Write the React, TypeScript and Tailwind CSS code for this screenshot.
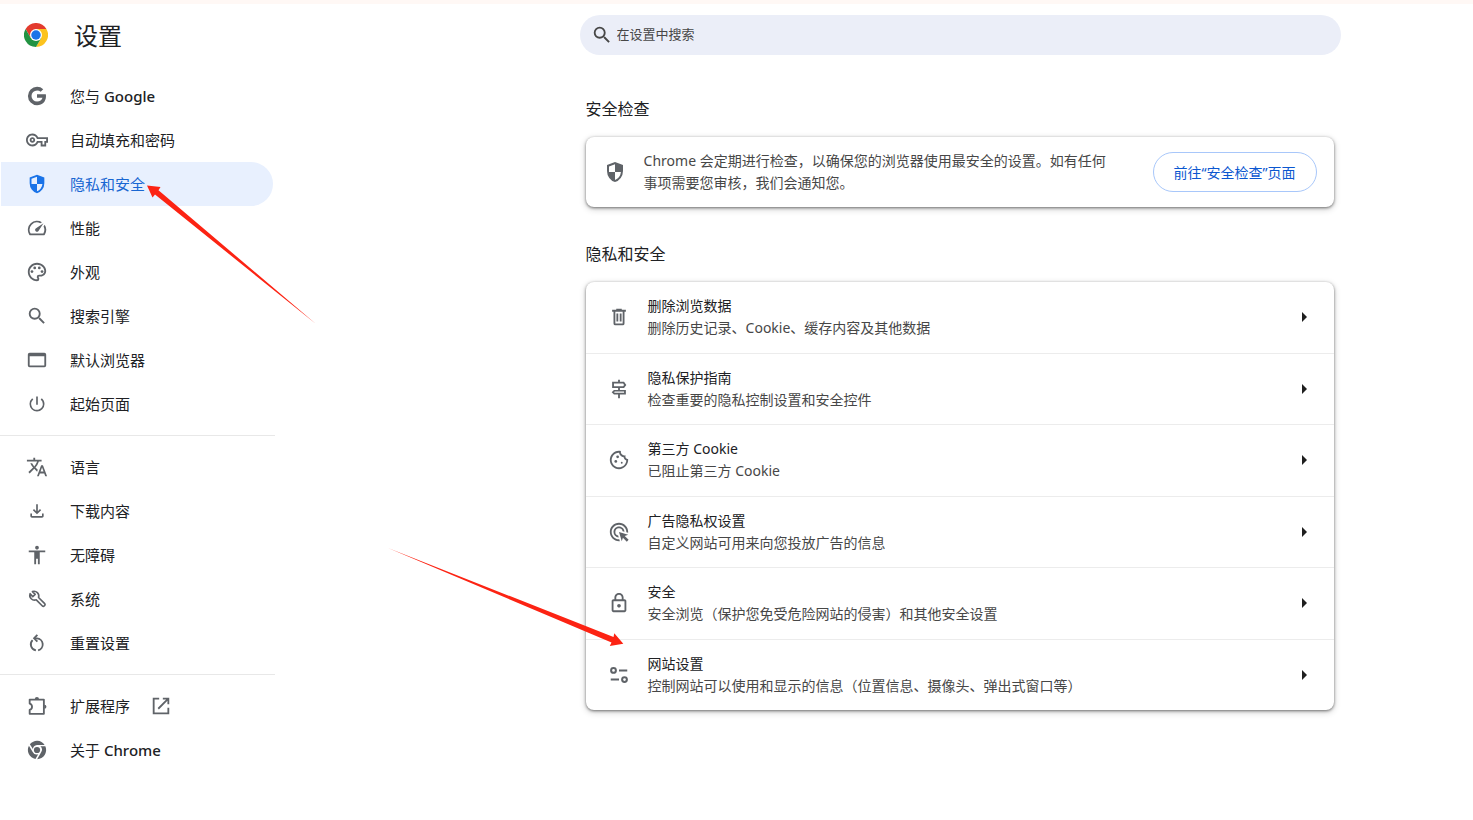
import type { ReactNode } from 'react'
import {
  MdOutlineVpnKey,
  MdOutlinePalette,
  MdSearch,
  MdPowerSettingsNew,
  MdTranslate,
  MdAccessibility,
  MdOutlineCookie,
  MdOutlineLock,
  MdAdsClick,
  MdOutlineFileDownload,
} from 'react-icons/md'

function Svg({ children, box = '0 0 24 24' }: { children: ReactNode; box?: string }) {
  return (
    <svg viewBox={box} width="1em" height="1em" fill="currentColor" aria-hidden="true">
      {children}
    </svg>
  )
}

const ShieldIcon = () => (
  <Svg box="0 -960 960 960">
    <path d="M480-80q-139-35-229.500-159.500T160-516v-244l320-120 320 120v244q0 152-90.500 276.500T480-80Zm0-84q97-30 162-118.500T718-480H480v-315l-240 90v207q0 7 2 18h238v316Z" />
  </Svg>
)

const GoogleIcon = () => (
  <Svg>
    <path d="M12 10.200v3.700h6c-.6 2.500-2.800 4.200-5.900 4.200a6.100 6.100 0 1 1 0-12.200c1.500 0 2.800.5 3.900 1.500l2.800-2.800A10 10 0 0 0 12.100 2a10 10 0 1 0 0 20c5.800 0 9.700-4.100 9.700-9.800 0-.7-.1-1.400-.2-2z" />
  </Svg>
)

const SpeedIcon = () => (
  <Svg>
    <path d="m20.38 8.57-1.23 1.85a8 8 0 0 1-.22 7.58H5.07A8 8 0 0 1 15.58 6.85l1.85-1.23A10 10 0 0 0 3.35 19a2 2 0 0 0 1.72 1h13.85a2 2 0 0 0 1.74-1 10 10 0 0 0-.27-10.44zm-9.79 6.84a2 2 0 0 0 2.83 0l5.66-8.49-8.49 5.66a2 2 0 0 0 0 2.83z" />
  </Svg>
)

const BrowserIcon = () => (
  <Svg>
    <path d="M20 4H4a2 2 0 0 0-2 2v12a2 2 0 0 0 2 2h16a2 2 0 0 0 2-2V6a2 2 0 0 0-2-2zm0 14H4V8h16v10z" />
  </Svg>
)

const WrenchIcon = () => (
  <Svg>
    <g fill="none" stroke="currentColor" strokeWidth="1.800" strokeLinejoin="round">
      <path d="M4.500 6.200a5.200 5.200 0 0 0 6.700 6.700l6.700 6.700a1.300 1.300 0 0 0 1.900 0l.6-.6a1.300 1.300 0 0 0 0-1.900l-6.700-6.700A5.200 5.200 0 0 0 7 3.900l3 3-2.600 2.500z" />
    </g>
  </Svg>
)

const ResetIcon = () => (
  <Svg>
    <g fill="none" stroke="currentColor" strokeWidth="2">
      <path d="M10.800 20A6.600 6.600 0 0 1 7.200 8.800" />
      <path d="M13.200 20A6.600 6.600 0 0 0 12 7H9.600" />
      <path d="M12.400 3.200 8.800 6.900l3.600 3.700" />
    </g>
  </Svg>
)

const OpenIcon = () => (
  <Svg>
    <path d="M10 3v2H5v14h14v-5h2v7H3V3h7zm4 0h7v7h-2V6.400l-9.300 9.300-1.400-1.400L17.600 5H14V3z" />
  </Svg>
)

const ExtensionIcon = () => (
  <Svg>
    <path
      d="M4 5h15.500v15.500H4v-4.200c1.700-.5 2.600-1.900 2.600-3.500S5.700 9.800 4 9.300z"
      fill="none"
      stroke="currentColor"
      strokeWidth="2"
      strokeLinejoin="round"
    />
    <path d="M9.600 4.500a2.300 2.300 0 0 1 4.600 0zM20 10.500a2.300 2.300 0 0 1 0 4.600z" />
  </Svg>
)

const ChromeMonoIcon = () => (
  <Svg>
    <circle cx="12" cy="12" r="3.400" />
    <path d="M12 6.500h8.300A10 10 0 0 0 4.200 5.700l3.300 5.200A5 5 0 0 1 12 6.500z" />
    <path d="M3.200 7.300a10 10 0 0 0 7.100 14.500l3-5.100A5 5 0 0 1 7.300 14.200z" />
    <path d="M21.100 8h-5.400a5 5 0 0 1 .8 6.500L12.200 22A10 10 0 0 0 21.100 8z" />
  </Svg>
)

const TrashIcon = () => (
  <Svg>
    <path d="M15 4V3H9v1H4.500v2.200H6V19a2 2 0 0 0 2 2h8a2 2 0 0 0 2-2V6.200h1.500V4H15zm1 15H8V6.200h8V19z" />
    <path d="M9.200 8.200h2v8.600h-2zM12.800 8.200h2v8.600h-2z" />
  </Svg>
)

const SignpostIcon = () => (
  <Svg>
    <path
      fillRule="evenodd"
      d="M11 22v-4H6.500L4 15.500 6.500 13H11v-2H4.500V4H11V2h2v2h4.500L20 7.500 17.500 11H13v2h6.500v5H13v4h-2zM6.500 9h10l1-1.500-1-1.500h-10v3zm.9 7.200h10.100v-1.400H7.400l-.8.700.8.700z"
    />
  </Svg>
)

const TuneIcon = () => (
  <Svg>
    <g fill="none" stroke="currentColor" strokeWidth="2.200">
      <circle cx="6" cy="7" r="2.600" />
      <circle cx="18" cy="17" r="2.600" />
      <path d="M12 7h9M3 17h9" />
    </g>
  </Svg>
)

const ChromeLogo = () => (
  <svg viewBox="0 0 48 48" className="size-6" aria-hidden="true">
    <path d="M24 12h20.800A24 24 0 0 0 3.200 12l10.400 18z" fill="#e33b2e" />
    <path d="M34.400 30 24 48A24 24 0 0 0 44.800 12H24z" fill="#fcc31e" />
    <path d="M13.600 30 3.200 12A24 24 0 0 0 24 48l10.400-18z" fill="#229342" />
    <circle cx="24" cy="24" r="12" fill="#fff" />
    <circle cx="24" cy="24" r="9.500" fill="#1a73e8" />
  </svg>
)

type NavEntry = { label: string; brand?: string; icon: ReactNode; active?: boolean; external?: boolean }

const navGroups: NavEntry[][] = [
  [
    { label: '您与', brand: 'Google', icon: <GoogleIcon /> },
    { label: '自动填充和密码', icon: <MdOutlineVpnKey /> },
    { label: '隐私和安全', icon: <ShieldIcon />, active: true },
    { label: '性能', icon: <SpeedIcon /> },
    { label: '外观', icon: <MdOutlinePalette /> },
    { label: '搜索引擎', icon: <MdSearch /> },
    { label: '默认浏览器', icon: <BrowserIcon /> },
    { label: '起始页面', icon: <MdPowerSettingsNew className="size-5" /> },
  ],
  [
    { label: '语言', icon: <MdTranslate /> },
    { label: '下载内容', icon: <MdOutlineFileDownload className="size-5" /> },
    { label: '无障碍', icon: <MdAccessibility /> },
    { label: '系统', icon: <WrenchIcon /> },
    { label: '重置设置', icon: <ResetIcon /> },
  ],
  [
    { label: '扩展程序', icon: <ExtensionIcon />, external: true },
    { label: '关于', brand: 'Chrome', icon: <ChromeMonoIcon /> },
  ],
]

const privacyRows = [
  { title: '删除浏览数据', desc: '删除历史记录、Cookie、缓存内容及其他数据', icon: <TrashIcon /> },
  { title: '隐私保护指南', desc: '检查重要的隐私控制设置和安全控件', icon: <SignpostIcon /> },
  { title: '第三方 Cookie', desc: '已阻止第三方 Cookie', icon: <MdOutlineCookie /> },
  { title: '广告隐私权设置', desc: '自定义网站可用来向您投放广告的信息', icon: <MdAdsClick /> },
  { title: '安全', desc: '安全浏览（保护您免受危险网站的侵害）和其他安全设置', icon: <MdOutlineLock /> },
  { title: '网站设置', desc: '控制网站可以使用和显示的信息（位置信息、摄像头、弹出式窗口等）', icon: <TuneIcon /> },
]

const cardClass =
  'rounded-lg bg-white shadow-[0_1px_3px_rgba(0,0,0,0.5),0_2px_6px_1px_rgba(0,0,0,0.15)]'

function NavItem({ label, brand, icon, active, external }: NavEntry) {
  return (
    <li>
      <a
        href="#"
        className={`ml-px mr-0.5 flex h-11 items-center rounded-r-full pl-[25px] text-[15px] ${
          active ? 'bg-[#e8f0fe] text-[#1967d2]' : 'text-[#202124]'
        }`}
      >
        <span
          className={`mr-[22px] flex size-[22px] items-center justify-center text-[22px] ${
            active ? 'text-[#1a73e8]' : 'text-[#5f6368]'
          }`}
        >
          {icon}
        </span>
        <span>
          {label}
          {brand && <span className="font-medium"> {brand}</span>}
        </span>
        {external && (
          <span className="ml-5 text-[22px] text-[#5f6368]">
            <OpenIcon />
          </span>
        )}
      </a>
    </li>
  )
}

export default function App() {
  return (
    <div className="relative min-h-screen overflow-x-hidden border-t-4 border-[#fff8f5] bg-white font-['Noto_Sans','Noto_Sans_CJK_SC',sans-serif] text-[#202124]">
      <div className="flex">
        {/* Sidebar */}
        <aside className="w-[275px] shrink-0">
          <header className="flex h-[62px] items-center pl-6">
            <ChromeLogo />
            <h1 className="ml-[26px] pt-0.5 text-[24px] leading-8">设置</h1>
          </header>
          <nav className="pt-2">
            {navGroups.map((group, i) => (
              <ul key={i} className={i > 0 ? 'mt-[9px] border-t border-[#e8e8e8] pt-[9px]' : ''}>
                {group.map((item) => (
                  <NavItem key={item.label} {...item} />
                ))}
              </ul>
            ))}
          </nav>
        </aside>

        {/* Content column */}
        <main className="flex min-w-0 flex-1">
          <div className="grow-[23]" />
          <div className="w-full max-w-[761px] pt-[11px]">
            <label className="flex h-10 items-center rounded-full bg-[#ebeef8] pl-[11px] text-[#474747]">
              <MdSearch className="size-[22px] shrink-0" />
              <input
                type="search"
                aria-label="在设置中搜索"
                placeholder="在设置中搜索"
                className="ml-1 min-w-0 flex-1 bg-transparent text-[13px] outline-none placeholder:text-[#474747]"
              />
            </label>

            <div className="pl-1.5 pr-[7px]">
              <section className="pt-[42px]">
                <h2 className="text-[16px] leading-6">安全检查</h2>
                <div className={`mt-4 flex min-h-[70px] items-center px-[17px] py-3 ${cardClass}`}>
                  <span className="text-[24px] text-[#5f6368]">
                    <ShieldIcon />
                  </span>
                  <p className="ml-[17px] mr-9 flex-1 text-[14px] leading-[22px] text-[#474747]">
                    Chrome 会定期进行检查，以确保您的浏览器使用最安全的设置。如有任何事项需要您审核，我们会通知您。
                  </p>
                  <button className="h-10 shrink-0 rounded-full border border-[#a8c7fa] px-5 text-[14px] text-[#0b57d0]">
                    前往“安全检查”页面
                  </button>
                </div>
              </section>

              <section className="pt-[35px]">
                <h2 className="text-[16px] leading-6">隐私和安全</h2>
                <div className={`mt-4 flex min-h-[428px] flex-col ${cardClass}`}>
                  {privacyRows.map((row, i) => (
                    <button
                      key={row.title}
                      className={`flex flex-1 items-center pl-[22px] pr-[27px] text-left ${
                        i > 0 ? 'border-t border-[#ececec]' : ''
                      }`}
                    >
                      <span className="text-[22px] text-[#5f6368]">{row.icon}</span>
                      <span className="ml-[18px] flex-1 text-[14px] leading-[22px]">
                        <span className="block">{row.title}</span>
                        <span className="block text-[#474747]">{row.desc}</span>
                      </span>
                      <svg viewBox="0 0 5 10" className="h-2.5 w-[5px]" fill="#1f1f1f" aria-hidden="true">
                        <path d="M0 0l5 5-5 5z" />
                      </svg>
                    </button>
                  ))}
                </div>
              </section>
            </div>
          </div>
          <div className="grow-[10]" />
        </main>
      </div>

      {/* Annotation arrows over the page */}
      <svg
        width="640"
        height="660"
        viewBox="0 4 640 660"
        className="pointer-events-none absolute left-0 top-0"
        fill="#fc2313"
        aria-hidden="true"
      >
        <path d="M147 185.500 160.500 187l-2 3.200L316 324 155 194.500l-2.500 3z" />
        <path d="M388 548 613.500 637l.8-3.800 9 10.500-13.500 2.300 1.700-3.500z" />
      </svg>
    </div>
  )
}
